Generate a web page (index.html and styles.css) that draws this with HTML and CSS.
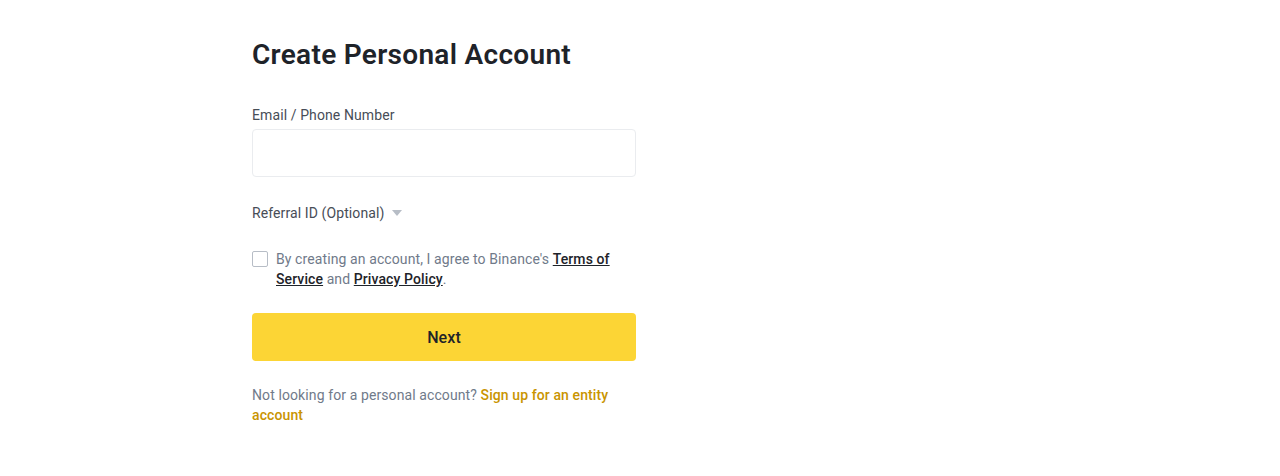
FILE: index.html
```html
<!DOCTYPE html>
<html lang="en">
<head>
<meta charset="utf-8">
<title>Create Personal Account</title>
<link rel="stylesheet" href="styles.css">
</head>
<body>
<main class="page">
  <section class="card">
    <h1 class="title">Create Personal Account</h1>
    <div class="field">
      <label class="label" for="email">Email / Phone Number</label>
      <input class="input" id="email" type="text">
    </div>
    <div class="referral">
      <span>Referral ID (Optional)</span>
      <span class="caret"></span>
    </div>
    <div class="agree">
      <span class="checkbox"></span>
      <p class="agree-text">By creating an account, I agree to Binance's <a href="#" class="strong-link">Terms of Service</a> and <a href="#" class="strong-link">Privacy Policy</a>.</p>
    </div>
    <button class="btn" type="button">Next</button>
    <p class="entity">Not looking for a personal account? <a href="#" class="entity-link">Sign up for an entity account</a></p>
  </section>
</main>
</body>
</html>
```
FILE: styles.css
```css
* { box-sizing: border-box; }
html, body { margin: 0; padding: 0; background: #fff; }
body {
  font-family: Roboto, "Noto Sans", "Liberation Sans", sans-serif;
  color: #1E2329;
  width: 1280px;
  height: 476px;
  overflow: hidden;
  letter-spacing: 0.1px;
}
.page {
  display: flex;
  padding-left: 252px;
  padding-top: 37px;
}
.card {
  width: 384px;
  display: flex;
  flex-direction: column;
}
.title {
  margin: 0;
  font-size: 28px;
  line-height: 36px;
  font-weight: 600;
  letter-spacing: 0.3px;
  color: #1E2329;
}
.field {
  margin-top: 33px;
  display: flex;
  flex-direction: column;
}
.label {
  font-size: 14px;
  line-height: 18px;
  color: #474D57;
  margin-bottom: 5px;
}
.input {
  height: 48px;
  border: 1px solid #EAECEF;
  border-radius: 4px;
  outline: none;
  padding: 0 12px;
  font: inherit;
}
.referral {
  margin-top: 26px;
  display: flex;
  align-items: center;
  gap: 8px;
  font-size: 14px;
  line-height: 20px;
  color: #474D57;
}
.caret {
  width: 0;
  height: 0;
  border-left: 5px solid transparent;
  border-right: 5px solid transparent;
  border-top: 6px solid #B7BDC6;
}
.agree {
  margin-top: 26px;
  display: flex;
  gap: 8px;
  align-items: flex-start;
}
.checkbox {
  flex: none;
  width: 16px;
  height: 16px;
  border: 1px solid #B7BDC6;
  border-radius: 2px;
  margin-top: 2px;
}
.agree-text {
  margin: 0;
  font-size: 14px;
  line-height: 20px;
  color: #707A8A;
}
.strong-link {
  color: #1E2329;
  font-weight: 500;
  text-decoration: underline;
}
.btn {
  margin-top: 24px;
  height: 48px;
  border: none;
  border-radius: 4px;
  background: #FCD535;
  color: #1E2329;
  font: inherit;
  font-size: 16px;
  font-weight: 500;
  letter-spacing: 0.1px;
}
.entity {
  margin: 24px 0 0;
  font-size: 14px;
  line-height: 20px;
  color: #707A8A;
}
.entity-link {
  color: #C99400;
  font-weight: 500;
  text-decoration: none;
}
```
